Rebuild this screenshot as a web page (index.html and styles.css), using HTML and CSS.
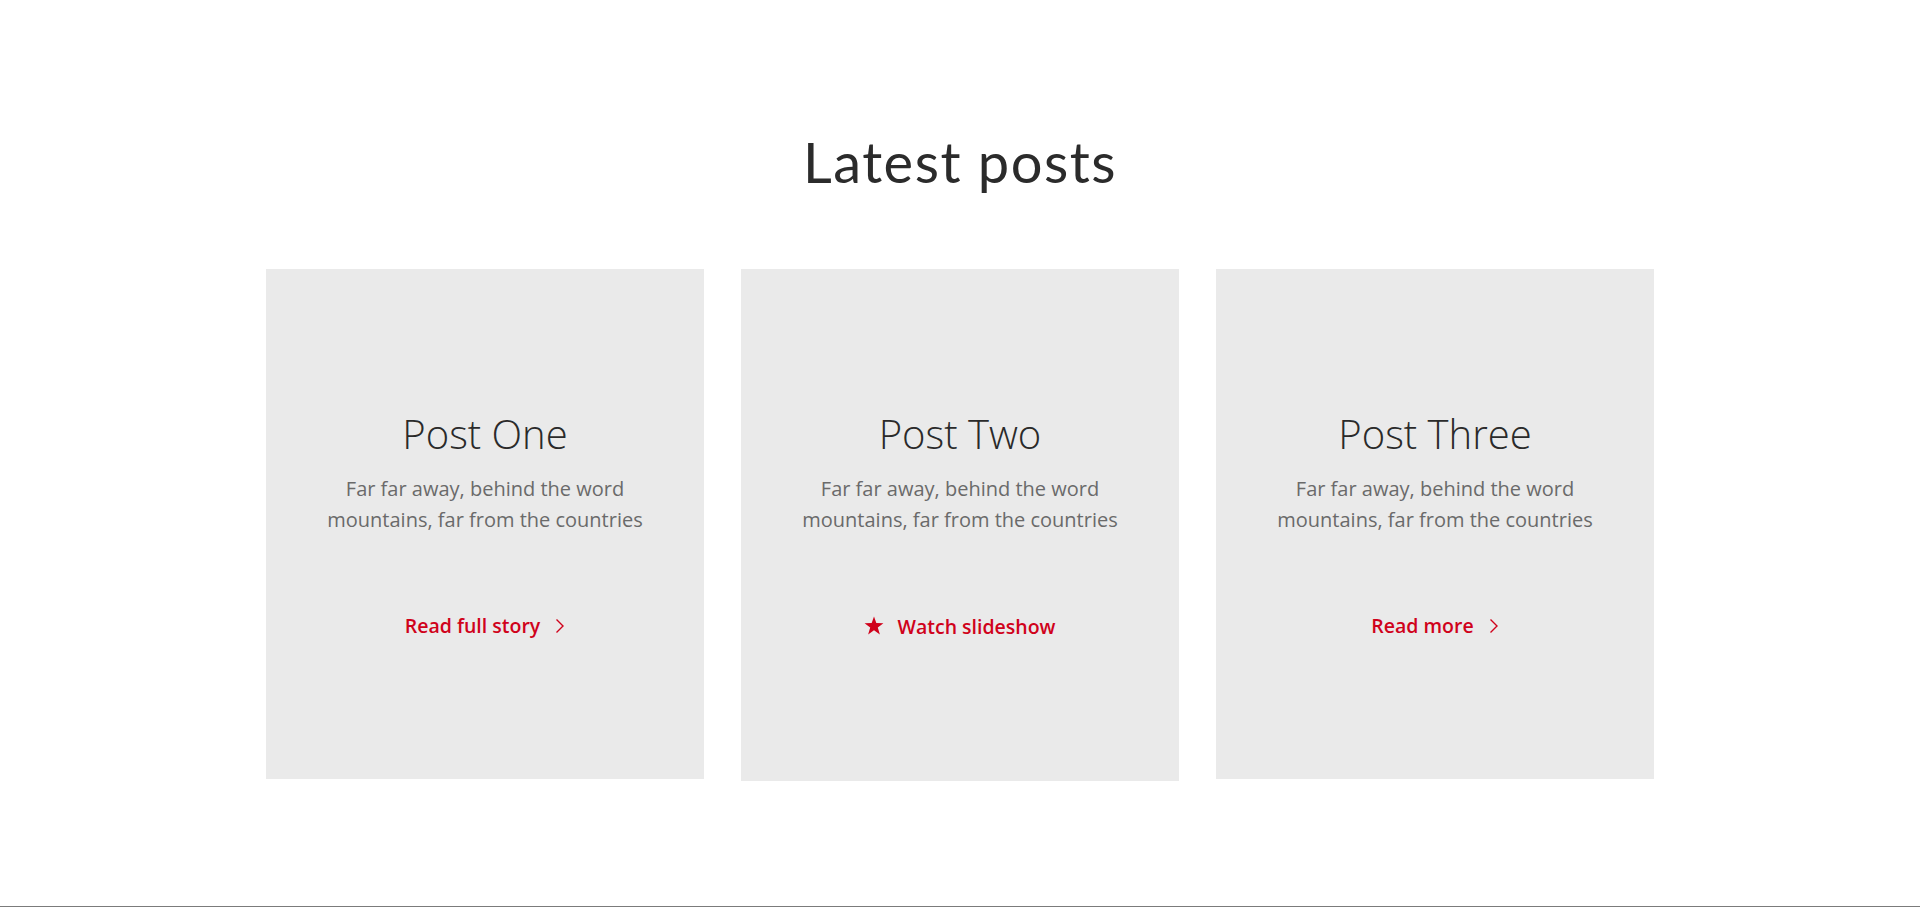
FILE: index.html
```html
<!DOCTYPE html>
<html lang="en">
<head>
    <meta charset="UTF-8">
    <meta name="viewport" content="width=device-width, initial-scale=1.0">
    <title>Latest posts</title>
    <link rel="stylesheet" href="styles.css">
</head>
<body>

    <section class="latest">
        <h2>Latest posts</h2>

        <div class="posts">
            <article class="post">
                <h3>Post One</h3>
                <p>Far far away, behind the word<br>mountains, far from the countries</p>
                <a href="#" class="post-link">
                    Read full story
                    <svg class="chevron" width="10" height="16" viewBox="0 0 10 16"><path d="M1.5 1.5 L8 8 L1.5 14.5" fill="none" stroke="currentColor" stroke-width="1.4"/></svg>
                </a>
            </article>

            <article class="post">
                <h3>Post Two</h3>
                <p>Far far away, behind the word<br>mountains, far from the countries</p>
                <a href="#" class="post-link star-link">
                    <svg class="star" width="20" height="19" viewBox="0 0 24 23"><polygon points="12,0.5 14.8,8.6 23.4,8.8 16.6,14 19.1,22.3 12,17.4 4.9,22.3 7.4,14 0.6,8.8 9.2,8.6" fill="currentColor"/></svg>
                    Watch slideshow
                </a>
            </article>

            <article class="post">
                <h3>Post Three</h3>
                <p>Far far away, behind the word<br>mountains, far from the countries</p>
                <a href="#" class="post-link">
                    Read more
                    <svg class="chevron" width="10" height="16" viewBox="0 0 10 16"><path d="M1.5 1.5 L8 8 L1.5 14.5" fill="none" stroke="currentColor" stroke-width="1.4"/></svg>
                </a>
            </article>
        </div>
    </section>

    <footer class="page-footer"></footer>

</body>
</html>
```

FILE: styles.css
```css
* {
    margin: 0;
    padding: 0;
    box-sizing: border-box;
}

body {
    font-family: 'Open Sans', sans-serif;
    background-color: #fff;
    color: #333;
}

.latest {
    height: 906px;
    padding-top: 128px;
}

.latest h2 {
    font-family: 'Lato', sans-serif;
    font-weight: 400;
    font-size: 56px;
    line-height: 67px;
    letter-spacing: 1.5px;
    color: #2b2b2b;
    text-align: center;
    margin-bottom: 74px;
}

.posts {
    display: flex;
    justify-content: center;
    align-items: flex-start;
    gap: 37px;
}

.post {
    width: 438px;
    background-color: #eaeaea;
    padding: 141px 20px 141px;
    text-align: center;
}

.post h3 {
    font-weight: 300;
    font-size: 40px;
    line-height: 48px;
    color: #2a2a2a;
    margin-bottom: 16px;
}

.post p {
    font-size: 20px;
    line-height: 30.5px;
    color: #6a6a6a;
    margin-bottom: 79px;
}

.post-link {
    display: inline-flex;
    align-items: center;
    gap: 15px;
    font-size: 19.5px;
    font-weight: 600;
    line-height: 24px;
    color: #d0021b;
    text-decoration: none;
}

.star-link {
    gap: 13px;
    height: 26px;
}

.star {
    margin-top: -3px;
}

.page-footer {
    border-top: 1px solid #7b7b7b;
}
```
